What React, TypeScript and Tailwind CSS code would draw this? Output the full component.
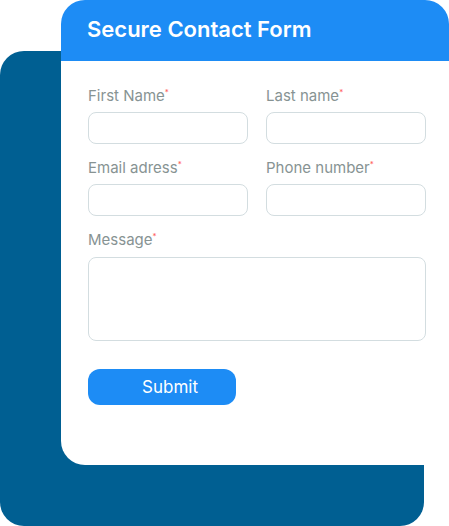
import type { FormEvent } from 'react'

type FieldProps = {
  id: string
  label: string
  type?: string
}

function FieldLabel({ id, label }: { id: string; label: string }) {
  return (
    <label htmlFor={id} className="flex items-start text-[15px] leading-5 text-[#879393]">
      {label}
      <span className="text-[8px] leading-3 text-[#ff5c5c]">*</span>
    </label>
  )
}

function Field({ id, label, type = 'text' }: FieldProps) {
  return (
    <div className="flex flex-col gap-1.5">
      <FieldLabel id={id} label={label} />
      <input
        id={id}
        name={id}
        type={type}
        required
        className="h-8 w-full rounded-lg border border-[#d3dde0] bg-white px-3 text-sm shadow-none outline-none focus:border-[#1d8cf5]"
      />
    </div>
  )
}

export default function App() {
  const handleSubmit = (e: FormEvent) => e.preventDefault()

  return (
    <main className="grid bg-white font-['Inter',sans-serif]">
      <div className="col-start-1 row-start-1 mt-[51px] mr-[25px] rounded-3xl bg-[#005f92]" />

      <section className="col-start-1 row-start-1 mb-[61px] ml-[61px] overflow-hidden rounded-3xl bg-white">
        <header className="bg-[#1d8cf5] px-[26px] pt-[13px] pb-4">
          <h1 className="text-[22px] leading-8 font-semibold text-white">Secure Contact Form</h1>
        </header>

        <form onSubmit={handleSubmit} className="pt-[25px] pr-[23px] pb-[60px] pl-[27px]">
          <div className="grid grid-cols-2 gap-x-[18px] gap-y-3.5">
            <Field id="firstName" label="First Name" />
            <Field id="lastName" label="Last name" />
            <Field id="email" label="Email adress" type="email" />
            <Field id="phone" label="Phone number" type="tel" />

            <div className="col-span-2 flex flex-col gap-[7px]">
              <FieldLabel id="message" label="Message" />
              <textarea
                id="message"
                name="message"
                required
                className="h-[84px] w-full resize-none rounded-lg border border-[#d3dde0] bg-white px-3 py-2 text-sm outline-none focus:border-[#1d8cf5]"
              />
            </div>
          </div>

          <button
            type="submit"
            className="mt-7 h-9 w-37 rounded-xl bg-[#1d8cf5] pl-4 text-[17px] leading-6 text-white"
          >
            Submit
          </button>
        </form>
      </section>
    </main>
  )
}
